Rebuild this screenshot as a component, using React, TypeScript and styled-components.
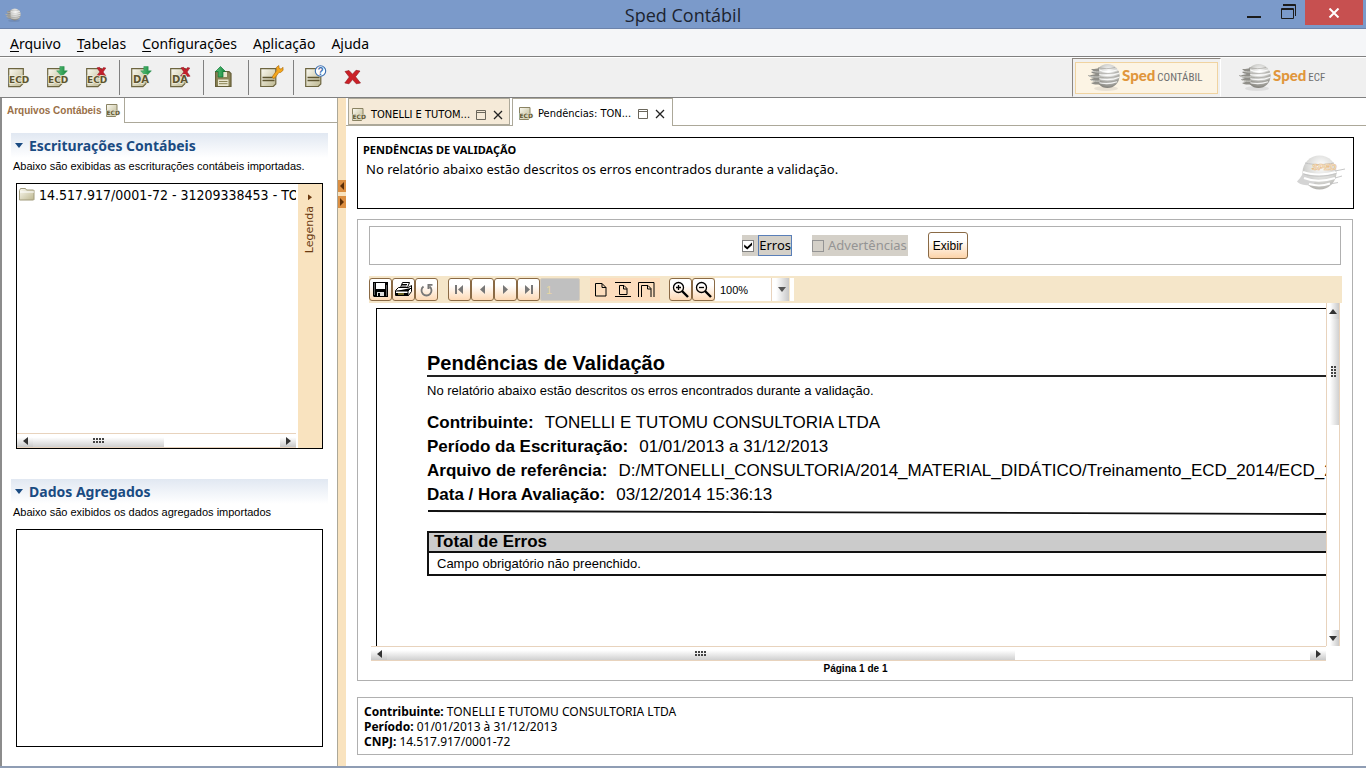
import React from 'react';
import styled, { createGlobalStyle, css } from 'styled-components';

const TAHOMA = '"Noto Sans", "DejaVu Sans Condensed", sans-serif';
const ARIAL = '"Liberation Sans", Arial, sans-serif';
const LINE = '#808080';
const BOX = '#b0b0b0';
const SAND = '#f9e3bf';

const Global = createGlobalStyle`
  *, *::before, *::after { box-sizing: border-box; }
  body { margin: 0; background: #fff; color: #000; font-family: ${TAHOMA}; }
  button, input, select { font: inherit; color: inherit; margin: 0; padding: 0; }
  h1, h2, p, dl, dd, dt { margin: 0; }
  svg { display: block; flex: none; }
`;

/* ---------- window frame ---------- */

const Window = styled.div`
  display: flex;
  flex-direction: column;
  min-height: 100vh;
`;

const TitleBar = styled.header`
  display: grid;
  grid-template-columns: 1fr auto 1fr;
  height: 29px;
  background: #7b9aca;
  border-bottom: 1px solid #6c83ab;
`;

const AppMark = styled.div`
  padding: 8px 0 0 5px;
`;

const WindowTitle = styled.h1`
  font: 400 18px/30px "Open Sans", sans-serif;
  color: #1c2430;
`;

const WindowControls = styled.div`
  display: flex;
  justify-content: flex-end;
  padding-right: 3px;
`;

const ControlButton = styled.button<{ $close?: boolean }>`
  display: flex;
  align-items: center;
  justify-content: center;
  width: ${p => (p.$close ? 58 : 34)}px;
  height: ${p => (p.$close ? 25 : 23)}px;
  border: 0;
  background: ${p => (p.$close ? '#c75050' : 'transparent')};
`;

const MenuBar = styled.nav`
  display: flex;
  gap: 16px;
  height: 28px;
  padding-left: 10px;
  background: #f5f6f8;
  border-bottom: 1px solid ${LINE};
`;

const MenuItem = styled.button`
  border: 0;
  background: none;
  font-size: 14px;
  line-height: 30px;
  u { text-underline-offset: 2px; }
`;

const ToolBar = styled.div`
  display: flex;
  align-items: center;
  height: 41px;
  background: #f0f0f0;
  border-top: 1px solid #fff;
  border-bottom: 1px solid ${LINE};
`;

const ToolButton = styled.button`
  display: flex;
  align-items: center;
  width: 39px;
  height: 36px;
  padding: 0 0 2px 8px;
  border: 0;
  background: none;
`;

const ToolSeparator = styled.span`
  width: 1px;
  height: 35px;
  margin: 0 3px 0 2px;
  background: ${LINE};
`;

const ModuleSwitch = styled.div`
  display: flex;
  align-self: stretch;
  margin-left: auto;
`;

const ModuleButton = styled.button<{ $active?: boolean }>`
  width: ${p => (p.$active ? 149 : 145)}px;
  padding: 2px;
  border: 1px solid #f0f0f0;
  background: #f0f0f0;
  ${p => p.$active && css`border-color: #8c8680 #fff #f0f0f0 #8c8680;`}
`;

const ModuleFace = styled.span<{ $active?: boolean }>`
  display: flex;
  align-items: center;
  height: 32px;
  padding: 0 0 2px ${p => (p.$active ? 12 : 14)}px;
  border: 1px solid ${p => (p.$active ? '#f0d3a0' : 'transparent')};
  background: ${p => (p.$active ? '#fcf4e4' : 'transparent')};
`;

const ModuleLabel = styled.span`
  display: flex;
  align-items: baseline;
  gap: 2px;
  margin-left: 2px;
`;

const ModuleBrand = styled.span`
  font: 900 15px/20px Lato, sans-serif;
  color: #e0963c;
`;

const ModuleName = styled.span`
  font: 400 11px/20px "Roboto Condensed", "Liberation Sans Narrow", sans-serif;
  color: #6f6f6f;
`;

const Workspace = styled.div`
  display: flex;
  flex: 1;
`;

const TaskStrip = styled.footer`
  height: 2px;
  background: #8f9db4;
`;

/* ---------- shared pieces ---------- */

const IconButton = styled.button`
  display: flex;
  padding: 0;
  border: 0;
  background: none;
`;

const HBar = styled.div`
  display: flex;
  align-items: stretch;
  height: 15px;
  border-top: 1px solid #e8d3bd;
  border-bottom: 1px solid #e8d3bd;
`;

const VBar = styled.div`
  display: flex;
  flex-direction: column;
  width: 14px;
  border-left: 1px solid #e8d3bd;
  border-right: 1px solid #e8d3bd;
`;

const Arrow = styled.button<{ $vertical?: boolean }>`
  display: flex;
  align-items: center;
  justify-content: center;
  flex: none;
  width: ${p => (p.$vertical ? 12 : 16)}px;
  height: ${p => (p.$vertical ? 16 : 13)}px;
  border: 0;
  background: linear-gradient(${p => (p.$vertical ? '90deg' : '180deg')}, #fff 25%, #c8c8c8);
`;

const Track = styled.div<{ $vertical?: boolean }>`
  display: flex;
  flex: 1;
  flex-direction: ${p => (p.$vertical ? 'column' : 'row')};
`;

const Thumb = styled.div<{ $vertical?: boolean; $share: number }>`
  display: flex;
  align-items: center;
  justify-content: center;
  flex: 0 0 ${p => p.$share}%;
  background: linear-gradient(${p => (p.$vertical ? '90deg' : '180deg')}, #fff 25%, #d0d0d0);
`;

/* ---------- left side ---------- */

const SideBar = styled.aside`
  display: flex;
  flex-direction: column;
  flex: none;
  width: 338px;
  border-left: 2px solid #8c8c8c;
  border-right: 1px solid #aca899;
`;

const SideTabs = styled.div`
  display: flex;
  height: 25px;
`;

const SideTab = styled.button`
  display: flex;
  align-items: center;
  gap: 5px;
  padding: 0 3px 0 5px;
  border: 0;
  border-right: 1px solid #aca899;
  background: #fff;
  font: 700 10px/23px ${ARIAL};
  color: #9a7048;
`;

const TabRest = styled.span`
  flex: 1;
  border-bottom: 1px solid #aca899;
`;

const SideBody = styled.div`
  display: flex;
  flex-direction: column;
  flex: 1;
  padding: 10px 9px 19px;
`;

const SideSection = styled.section<{ $grow: number }>`
  display: flex;
  flex-direction: column;
  flex: ${p => p.$grow} 1 0;
  & + & { margin-top: 30px; }
`;

const SectionTitle = styled.h2`
  display: flex;
  align-items: center;
  gap: 6px;
  padding-left: 4px;
  background: linear-gradient(180deg, #e1e8f2, #fff);
  font-size: 14px;
  line-height: 25px;
  color: #1a4b82;
`;

const SectionNote = styled.p`
  padding-left: 2px;
  font: 11px/16px ${ARIAL};
`;

const ListBox = styled.div`
  display: flex;
  flex: 1;
  min-height: 120px;
  margin: 9px 5px 0;
  border: 1px solid #000;
`;

const TreeArea = styled.div`
  display: flex;
  flex-direction: column;
  flex: 1;
  min-width: 0;
  padding-right: 2px;
`;

const TreeItem = styled.div`
  display: flex;
  gap: 4px;
  flex: 1;
  align-items: flex-start;
  padding-left: 2px;
  overflow: hidden;
  font: 14px/22px "DejaVu Sans Condensed", ${TAHOMA};
  white-space: nowrap;
  svg { margin-top: 4px; }
`;

const Legend = styled.button`
  display: flex;
  align-items: flex-start;
  justify-content: center;
  width: 24px;
  padding-top: 10px;
  border: 0;
  background: ${SAND};
`;

const LegendText = styled.span`
  display: flex;
  align-items: center;
  gap: 6px;
  writing-mode: vertical-rl;
  transform: rotate(180deg);
  font: 11px/16px "DejaVu Sans", sans-serif;
  color: #6b3a10;
`;

const Sash = styled.div`
  display: flex;
  flex-direction: column;
  gap: 4px;
  flex: none;
  width: 8px;
  padding-top: 82px;
  background: ${SAND};
`;

const SashButton = styled(IconButton)`
  align-items: center;
  justify-content: center;
  height: 12px;
  background: #dc8f42;
`;

/* ---------- right side ---------- */

const Editor = styled.main`
  display: flex;
  flex-direction: column;
  flex: 1;
  min-width: 0;
`;

const EditorTabs = styled.div`
  display: flex;
  height: 28px;
  padding-left: 2px;
  background: linear-gradient(#aca899, #aca899) bottom / 100% 1px no-repeat;
`;

const EditorTab = styled.div<{ $active?: boolean }>`
  display: flex;
  align-items: center;
  width: ${p => (p.$active ? 161 : 162)}px;
  height: ${p => (p.$active ? 28 : 27)}px;
  margin-right: ${p => (p.$active ? 0 : 2)}px;
  padding: ${p => (p.$active ? '2px 7px 0 6px' : '6px 6px 0 3px')};
  border: 1px solid #aca899;
  border-bottom-width: ${p => (p.$active ? 0 : 1)}px;
  background: ${p => (p.$active ? '#fff' : '#f5ead8')};
`;

const TabLabel = styled.button`
  flex: 1;
  min-width: 0;
  margin-left: 4px;
  border: 0;
  background: none;
  font: 11px/16px "DejaVu Sans Condensed", sans-serif;
  text-align: left;
  white-space: nowrap;
`;

const TabTools = styled.span`
  display: flex;
  gap: 7px;
`;

const EditorBody = styled.div`
  display: flex;
  flex-direction: column;
  flex: 1;
  padding: 11px 12px 11px 11px;
`;

const Banner = styled.section`
  display: flex;
  justify-content: space-between;
  align-items: center;
  height: 72px;
  margin-bottom: 10px;
  padding: 0 8px 0 5px;
  border: 1px solid #000;
`;

const BannerText = styled.div`
  align-self: flex-start;
  padding-top: 3px;
`;

const BannerTitle = styled.h2`
  font-size: 11px;
  line-height: 18px;
`;

const BannerNote = styled.p`
  padding-left: 3px;
  font-size: 13px;
  line-height: 20px;
`;

const Panel = styled.section`
  display: flex;
  flex-direction: column;
  flex: 1;
  margin-right: 1px;
  padding: 6px 10px 4px 11px;
  border: 1px solid ${BOX};
`;

const FilterBar = styled.form`
  display: flex;
  align-items: center;
  justify-content: center;
  gap: 20px;
  height: 39px;
  margin: 0 1px 11px 0;
  border: 1px solid ${BOX};
`;

const Check = styled.label<{ $off?: boolean }>`
  display: flex;
  align-items: center;
  gap: ${p => (p.$off ? 3 : 4)}px;
  background: #d4d0c8;
  font-size: 13px;
  line-height: 19px;
  color: ${p => (p.$off ? '#949494' : '#000')};
`;

const CheckText = styled.span<{ $focus?: boolean }>`
  border: 1px solid ${p => (p.$focus ? '#5a7fb8' : 'transparent')};
`;

const CheckBox = styled.input`
  position: relative;
  appearance: none;
  width: 12px;
  height: 12px;
  border: 1px solid #808080;
  background: #fff;
  &:disabled { background: transparent; border-color: #949494; }
  &:checked::after {
    content: '';
    position: absolute;
    inset: 1px;
    background: #000;
    clip-path: polygon(0 38%, 38% 68%, 100% 8%, 100% 45%, 38% 100%, 0 70%);
  }
`;

const PeachButton = styled.button`
  height: 27px;
  padding: 0 4px;
  border: 1px solid #8a6a45;
  border-radius: 3px;
  background: linear-gradient(180deg, #fff 30%, #fdd3a8);
  font: 12px/24px ${ARIAL};
`;

const ReportBar = styled.div`
  display: flex;
  align-items: center;
  height: 27px;
  background: #f5e6c9;
`;

const ReportGroup = styled.div<{ $after: number }>`
  display: flex;
  margin-right: ${p => p.$after}px;
`;

const ReportButton = styled.button`
  display: flex;
  align-items: center;
  justify-content: center;
  width: 23px;
  height: 23px;
  border: 1px solid #8a6a45;
  border-radius: 3px;
  background: linear-gradient(180deg, #fff 30%, #fdd9b5);
  color: #000;
  &:disabled { color: #777; }
`;

const PageInput = styled.input`
  width: 40px;
  height: 23px;
  padding-left: 5px;
  border: 1px solid #d6cdbd;
  border-radius: 2px;
  background: #c0c0c0;
  font: 11px/20px ${ARIAL};
  color: #e6d7a4;
`;

const FitGroup = styled.div`
  display: flex;
  align-items: center;
  justify-content: space-between;
  width: 70px;
  height: 23px;
  margin: 0 9px 0 10px;
  padding: 0 5px;
  background: #fdddbd;
`;

const ZoomBox = styled.div`
  display: flex;
  height: 23px;
  width: 79px;
  background: linear-gradient(90deg, #fff 56px, #e8d3bd 56px, #e8d3bd 57px, #fff 57px, #fff 61px, #c8c8c8 74px, #f5e6c9 74px, #f5e6c9 75px, #fff 75px);
`;

const ZoomSelect = styled.select`
  flex: 1;
  min-width: 0;
  padding-left: 5px;
  border: 0;
  appearance: none;
  background: none;
  font: 11px/22px ${ARIAL};
`;

const ZoomArrow = styled.svg`
  margin: 9px 8px 0 0;
  pointer-events: none;
`;

const Viewer = styled.div`
  display: grid;
  grid-template-columns: minmax(0, 1fr) 14px;
  grid-template-rows: 1fr 15px;
  flex: 1;
  padding: 0 2px 0 2px;
`;

const Paper = styled.article`
  margin: 5px 0 0 5px;
  padding: 43px 0 0 50px;
  border: solid #000;
  border-width: 1px 0 0 1px;
  overflow: hidden;
  font-family: ${ARIAL};
  white-space: nowrap;
`;

const ReportTitle = styled.h2`
  border-bottom: 2px solid #222;
  font-size: 20px;
  line-height: 23px;
`;

const ReportNote = styled.p`
  margin: 5px 0 11px;
  font-size: 13px;
  line-height: 18px;
`;

const Facts = styled.dl`
  font-size: 17px;
  line-height: 24px;
`;

const Fact = styled.div`
  display: flex;
  gap: 11px;
  dt { font-weight: 700; }
`;

const SlantRule = styled.svg`
  width: 100%;
  height: 5px;
  margin: 3px 0 16px;
`;

const ErrorTable = styled.table`
  width: 100%;
  border-collapse: separate;
  border-spacing: 0;
  border: solid #111;
  border-width: 2px 0 2px 2px;
  th, td { text-align: left; }
  th {
    padding: 0 0 0 5px;
    border-bottom: 2px solid #111;
    background: #cbcbcb;
    font-size: 17px;
    line-height: 18px;
  }
  td {
    padding: 0 0 0 8px;
    font-size: 13px;
    line-height: 21px;
  }
`;

const PageLabel = styled.p`
  font: 700 10px/15px ${ARIAL};
  text-align: center;
`;

const Summary = styled.section`
  height: 58px;
  margin: 16px 1px 0 0;
  padding: 6px;
  border: 1px solid ${BOX};
  font-size: 12px;
  line-height: 15px;
`;

/* ---------- drawings ---------- */

const HiddenDefs = styled.svg`
  position: absolute;
`;

const Defs = () => (
  <HiddenDefs width="0" height="0" aria-hidden="true">
    <defs>
      <linearGradient id="paper" x1="0" y1="0" x2="1" y2="1">
        <stop offset="0" stopColor="#fbfaf2" />
        <stop offset="1" stopColor="#bdb78f" />
      </linearGradient>
      <radialGradient id="ball" cx="0.55" cy="0.3" r="0.75">
        <stop offset="0" stopColor="#ffffff" />
        <stop offset="0.6" stopColor="#bcbcb8" />
        <stop offset="1" stopColor="#77756e" />
      </radialGradient>
      <linearGradient id="green" x1="0" y1="0" x2="1" y2="0">
        <stop offset="0" stopColor="#5fc27c" />
        <stop offset="1" stopColor="#14883c" />
      </linearGradient>
    </defs>
  </HiddenDefs>
);

type Badge = 'down' | 'remove' | undefined;

const DocIcon = ({ text, badge }: { text: string; badge?: Badge }) => (
  <svg width="24" height="24" viewBox="0 0 24 24">
    <path d="M.7 3.700h14.600v14.600l-3.400 3.400H.7z" fill="url(#paper)" stroke="#6d6540" strokeWidth="1.200" />
    {badge === 'down' && <path d="M12.800 1.500h4.400v4.300h3.200L15 11.500 9.600 5.800h3.200z" fill="url(#green)" stroke="#2c9150" strokeWidth="0.500" />}
    {badge === 'remove' && <path d="M11 2.800l2.600-.5 1.900 2.500 2-2.300 2.300.5-2.700 4 3 4.200-2.800.3-1.900-2.600-2.100 2.600-2.800-.6 3.300-4z" fill="#c4202c" stroke="#8f1420" strokeWidth="0.500" />}
    <text x={text.length > 2 ? 1 : 2} y="18" fontFamily="DejaVu Sans, sans-serif" fontWeight="700" fontSize={text.length > 2 ? 9 : 10} fill="#5d5430" stroke="#efecd9" strokeWidth="1.400" paintOrder="stroke">{text}</text>
  </svg>
);

const SmallEcd = () => (
  <svg width="15" height="15" viewBox="0 0 15 15">
    <path d="M.5 1.500h10.500v10l-1.500 2H.5z" fill="url(#paper)" stroke="#8a8363" />
    <text x="0.500" y="11.500" fontFamily="DejaVu Sans, sans-serif" fontWeight="700" fontSize="6" fill="#5d5430" stroke="#e9e6d0" strokeWidth="1" paintOrder="stroke">ECD</text>
  </svg>
);

const SaveUpIcon = () => (
  <svg width="24" height="24" viewBox="0 0 24 24">
    <path d="M.6 6.600h13.400l2 2v12.800H.6z" fill="#8b8457" stroke="#655e38" strokeWidth="1.200" />
    <path d="M4 7h8v5H4zM3 14.500h10.500V21H3z" fill="#e9e6cf" />
    <path d="M4 16.500h8.500M4 18.700h8.500" stroke="#8b8457" />
    <path d="M5.500 1.500l5 5H8V12H3.200V6.500H.5z" fill="url(#green)" stroke="#0d7a33" strokeWidth="0.700" />
  </svg>
);

const SheetIcon = ({ kind }: { kind: 'tools' | 'help' }) => (
  <svg width="24" height="24" viewBox="0 0 24 24">
    <path d="M.7 3.700h15.100v15.300l-2.500 2.500H.7z" fill="url(#paper)" stroke="#6d6540" strokeWidth="1.200" />
    <path d="M2.500 12.500h12M2.500 15.500h12" stroke="#5d5430" strokeWidth="1.500" />
    {kind === 'tools' ? (
      <path d="M12.500 11.500l4.200-6-.4-3 2.500-2 .4 3 2 .6 1.700-1.800.2 3-2.600 2.200-1.500-.2-4 5.500c-1 1.200-3.200.3-2.500-1.300z" fill="#f6a81c" stroke="#b06d08" strokeWidth="0.700" />
    ) : (
      <>
        <circle cx="15.500" cy="6" r="5.200" fill="#fff" stroke="#3d6fb0" strokeWidth="1.100" />
        <text x="15.500" y="9.500" textAnchor="middle" fontFamily="Liberation Sans, sans-serif" fontWeight="700" fontSize="10" fill="#3d6fb0">?</text>
      </>
    )}
  </svg>
);

const ExitIcon = () => (
  <svg width="18" height="18" viewBox="0 0 18 18">
    <path d="M1 3.500l4-1 3.500 3.700L12 2.300l4 .7-4.500 5.700L16.500 15l-4.200.8-3.800-4.200L5 15.800.8 15l4.500-6z" fill="#cb2027" stroke="#8e1218" strokeWidth="0.600" />
  </svg>
);

const Globe = ({ size = 32 }: { size?: number }) => (
  <svg width={size} height={size * 0.875} viewBox="0 0 32 28">
    <ellipse cx="18" cy="25.500" rx="12" ry="2.500" fill="#000" opacity="0.080" />
    <circle cx="19.500" cy="13" r="12" fill="url(#ball)" />
    <path d="M10 6.500c5 2.500 13 2.600 20 .3M8 10.800c8 2.200 16 2 23.200-.6M8 15c8 2.200 17 2 23.200-.8M9 19.200c6 1.800 14 1.800 20-.4" stroke="#fff" strokeWidth="1.100" fill="none" opacity="0.850" />
    <path d="M10 4.500c5 1.500 12 1.500 17 0M8.500 9c7 2.200 16 2 22.500-.4M7.500 13.200c8 2.200 17 2 24-.8M8 17.500c8 2 16 1.800 22.500-.6" stroke="#8c8a84" strokeWidth="0.700" fill="none" opacity="0.700" />
    <path d="M11 5c-3 1-6 1.300-8 1l2.500 2.300L3 9c1.500 1.500 3 1.800 5 1.900L2 12.300c-1 0-2-.2-2-.2.800 1.700 3 2.600 6 2.800l-4 1.300c1 1.500 3 2.300 5.500 2.500L3 20c2 1.500 5 1.800 8.500 1.500z" fill="#8f8e88" />
    <path d="M4 8c3 1 6 1.200 9 .9M1 12.800c3 1.200 7 1.500 11 1M3 17c3 1.200 6 1.400 9 1" stroke="#d8d8d4" strokeWidth="0.900" fill="none" />
  </svg>
);

const BannerGlobe = () => (
  <svg width="48" height="36" viewBox="0 0 48 36" opacity="0.600">
    <circle cx="22.500" cy="17.500" r="17" fill="url(#ball)" />
    <path d="M9 13C6 18 4 23 0 26.500c2 3 9 4.500 17 3.500 2-5-1-8-7-9z" fill="#b8b8b8" />
    <path d="M6 17c8 3 22 3.500 33 0M7 23c10 4 20 3.500 31 0M12 29c7 2 14 2 21-.5" stroke="#fff" strokeWidth="2" fill="none" />
    <path d="M8 8c9 2 20 2 29 0M6.500 19c9 3 22 3 33-.5M38 16l10-2M38 23l7-2M33 29l8-1.500" stroke="#999" strokeWidth="0.900" fill="none" />
    <text x="15" y="15" fontFamily="Liberation Sans, sans-serif" fontStyle="italic" fontWeight="700" fontSize="9" fill="#f5f5f5" stroke="#d98a20" strokeWidth="0.600">SPED</text>
  </svg>
);

const Folder = () => (
  <svg width="16" height="13" viewBox="0 0 16 13">
    <path d="M.5 2.500l1-2h5l1 1.500h7l.5.500v9l-.5.500h-14z" fill="url(#paper)" stroke="#a19b7c" />
    <path d="M1 4h14" stroke="#fff" />
  </svg>
);

const Tri = ({ dir, w = 6, h = 8, fill = '#333' }: { dir: 'l' | 'r' | 'u' | 'd'; w?: number; h?: number; fill?: string }) => {
  const d = { l: `M${w} 0V${h}L0 ${h / 2}z`, r: `M0 0V${h}L${w} ${h / 2}z`, u: `M0 ${h}H${w}L${w / 2} 0z`, d: `M0 0H${w}L${w / 2} ${h}z` }[dir];
  return <svg width={w} height={h}><path d={d} fill={fill} /></svg>;
};

const Grip = ({ vertical }: { vertical?: boolean }) => (
  <svg width={vertical ? 5 : 11} height={vertical ? 11 : 5}>
    <path
      d={vertical ? 'M1 0v11M4 0v11' : 'M0 1h11M0 4h11'}
      stroke="#444"
      strokeWidth="2"
      strokeDasharray="2 1"
    />
  </svg>
);

const TabMax = () => <svg width="10" height="10"><path d="M.5.500h9v9h-9zM.5 2.500h9" fill="none" stroke="#6b675c" /></svg>;
const TabX = () => <svg width="10" height="10"><path d="M1 1l8 8M9 1L1 9" stroke="#222" strokeWidth="1.300" /></svg>;

const HScroll = ({ share }: { share: number }) => (
  <HBar>
    <Arrow aria-label="Rolar para a esquerda"><Tri dir="l" w={5} /></Arrow>
    <Track><Thumb $share={share}><Grip /></Thumb></Track>
    <Arrow aria-label="Rolar para a direita"><Tri dir="r" w={5} /></Arrow>
  </HBar>
);

const VScroll = ({ share }: { share: number }) => (
  <VBar>
    <Arrow $vertical aria-label="Rolar para cima"><Tri dir="u" w={8} h={5} /></Arrow>
    <Track $vertical><Thumb $vertical $share={share}><Grip vertical /></Thumb></Track>
    <Arrow $vertical aria-label="Rolar para baixo"><Tri dir="d" w={8} h={5} /></Arrow>
  </VBar>
);

/* ---------- page ---------- */

const facts = [
  ['Contribuinte:', 'TONELLI E TUTOMU CONSULTORIA LTDA'],
  ['Período da Escrituração:', '01/01/2013 a 31/12/2013'],
  ['Arquivo de referência:', 'D:/MTONELLI_CONSULTORIA/2014_MATERIAL_DIDÁTICO/Treinamento_ECD_2014/ECD_2014'],
  ['Data / Hora Avaliação:', '03/12/2014 15:36:13'],
];

export default function App() {
  return (
    <Window>
      <Global />
      <Defs />
      <TitleBar>
        <AppMark><Globe size={16} /></AppMark>
        <WindowTitle>Sped Contábil</WindowTitle>
        <WindowControls>
          <ControlButton aria-label="Minimizar">
            <svg width="14" height="14"><path d="M0 12h14" stroke="#1c1c1c" strokeWidth="2" /></svg>
          </ControlButton>
          <ControlButton aria-label="Restaurar">
            <svg width="15" height="15"><path d="M.5 4.500h12v10H.5zM.5 5.500h12M2 .500h12.500V12M2 1.500h12" fill="none" stroke="#1c1c1c" /></svg>
          </ControlButton>
          <ControlButton $close aria-label="Fechar">
            <svg width="12" height="10"><path d="M1.500.500l9 9M10.500.500l-9 9" stroke="#fff" strokeWidth="2" /></svg>
          </ControlButton>
        </WindowControls>
      </TitleBar>

      <MenuBar>
        <MenuItem><u>A</u>rquivo</MenuItem>
        <MenuItem><u>T</u>abelas</MenuItem>
        <MenuItem><u>C</u>onfigurações</MenuItem>
        <MenuItem>A<u>p</u>licação</MenuItem>
        <MenuItem>A<u>j</u>uda</MenuItem>
      </MenuBar>

      <ToolBar>
        <ToolButton aria-label="Nova escrituração"><DocIcon text="ECD" /></ToolButton>
        <ToolButton aria-label="Importar escrituração"><DocIcon text="ECD" badge="down" /></ToolButton>
        <ToolButton aria-label="Excluir escrituração"><DocIcon text="ECD" badge="remove" /></ToolButton>
        <ToolSeparator />
        <ToolButton aria-label="Importar dados agregados"><DocIcon text="DA" badge="down" /></ToolButton>
        <ToolButton aria-label="Excluir dados agregados"><DocIcon text="DA" badge="remove" /></ToolButton>
        <ToolSeparator />
        <ToolButton aria-label="Cópia de segurança"><SaveUpIcon /></ToolButton>
        <ToolSeparator />
        <ToolButton aria-label="Configurações"><SheetIcon kind="tools" /></ToolButton>
        <ToolSeparator />
        <ToolButton aria-label="Ajuda"><SheetIcon kind="help" /></ToolButton>
        <ToolButton aria-label="Sair"><ExitIcon /></ToolButton>
        <ModuleSwitch>
          <ModuleButton $active>
            <ModuleFace $active>
              <Globe />
              <ModuleLabel><ModuleBrand>Sped</ModuleBrand><ModuleName>CONTÁBIL</ModuleName></ModuleLabel>
            </ModuleFace>
          </ModuleButton>
          <ModuleButton>
            <ModuleFace>
              <Globe />
              <ModuleLabel><ModuleBrand>Sped</ModuleBrand><ModuleName>ECF</ModuleName></ModuleLabel>
            </ModuleFace>
          </ModuleButton>
        </ModuleSwitch>
      </ToolBar>

      <Workspace>
        <SideBar>
          <SideTabs>
            <SideTab>Arquivos Contábeis <SmallEcd /></SideTab>
            <TabRest />
          </SideTabs>
          <SideBody>
            <SideSection $grow={316}>
              <SectionTitle><Tri dir="d" w={8} h={5} fill="#1a4b82" />Escriturações Contábeis</SectionTitle>
              <SectionNote>Abaixo são exibidas as escriturações contábeis importadas.</SectionNote>
              <ListBox>
                <TreeArea>
                  <TreeItem><Folder />14.517.917/0001-72 - 31209338453 - TONELLI E TUTOMU</TreeItem>
                  <HScroll share={53} />
                </TreeArea>
                <Legend>
                  <LegendText>Legenda <Tri dir="l" w={4} h={6} fill="#6b3a10" /></LegendText>
                </Legend>
              </ListBox>
            </SideSection>
            <SideSection $grow={268}>
              <SectionTitle><Tri dir="d" w={8} h={5} fill="#1a4b82" />Dados Agregados</SectionTitle>
              <SectionNote>Abaixo são exibidos os dados agregados importados</SectionNote>
              <ListBox />
            </SideSection>
          </SideBody>
        </SideBar>

        <Sash>
          <SashButton aria-label="Recolher painel"><Tri dir="l" w={4} fill="#5c2f08" /></SashButton>
          <SashButton aria-label="Expandir painel"><Tri dir="r" w={4} fill="#5c2f08" /></SashButton>
        </Sash>

        <Editor>
          <EditorTabs>
            <EditorTab>
              <SmallEcd />
              <TabLabel>TONELLI E TUTOM...</TabLabel>
              <TabTools>
                <IconButton aria-label="Maximizar"><TabMax /></IconButton>
                <IconButton aria-label="Fechar aba"><TabX /></IconButton>
              </TabTools>
            </EditorTab>
            <EditorTab $active>
              <SmallEcd />
              <TabLabel>Pendências: TON...</TabLabel>
              <TabTools>
                <IconButton aria-label="Maximizar"><TabMax /></IconButton>
                <IconButton aria-label="Fechar aba"><TabX /></IconButton>
              </TabTools>
            </EditorTab>
          </EditorTabs>

          <EditorBody>
            <Banner>
              <BannerText>
                <BannerTitle>PENDÊNCIAS DE VALIDAÇÃO</BannerTitle>
                <BannerNote>No relatório abaixo estão descritos os erros encontrados durante a validação.</BannerNote>
              </BannerText>
              <BannerGlobe />
            </Banner>

            <Panel>
              <FilterBar onSubmit={e => e.preventDefault()}>
                <Check>
                  <CheckBox type="checkbox" defaultChecked />
                  <CheckText $focus>Erros</CheckText>
                </Check>
                <Check $off>
                  <CheckBox type="checkbox" disabled />
                  <CheckText>Advertências</CheckText>
                </Check>
                <PeachButton>Exibir</PeachButton>
              </FilterBar>

              <ReportBar>
                <ReportGroup $after={10}>
                  <ReportButton aria-label="Salvar">
                    <svg width="15" height="15"><path d="M0 0h15v15H1l-1-1z" /><path d="M3 1h9v6H3z" fill="#fff" /><path d="M4 10h7v4H4z" fill="#ddd" /><path d="M5 11h2v3H5z" /><path d="M1.500 1v12M13.500 3v11" stroke="#777" strokeWidth="0.800" /></svg>
                  </ReportButton>
                  <ReportButton aria-label="Imprimir">
                    <svg width="17" height="15"><path d="M5.500 5.500l2-5h7l-2 5zM.5 8.500l3-3h10l3-2v6l-3 4h-13z" fill="#fff" stroke="#000" /><path d="M7 2.500h5M6.500 4h5M1 9h12l3-3M13 9v5" stroke="#000" /><path d="M1 11h12v3H1z" fill="#000" /><path d="M3 12h6" stroke="#ddc84a" /></svg>
                  </ReportButton>
                  <ReportButton aria-label="Atualizar" disabled>
                    <svg width="13" height="14"><path d="M3.500 3.500a5 5 0 1 0 6 0" fill="none" stroke="currentColor" strokeWidth="1.800" /><path d="M7.500 1h5v1.800H9.500V6H7.500z" fill="currentColor" /></svg>
                  </ReportButton>
                </ReportGroup>
                <ReportGroup $after={0}>
                  <ReportButton aria-label="Primeira página" disabled>
                    <svg width="9" height="9"><path d="M0 0h2v9H0zM8 0v9L3 4.500z" fill="currentColor" /></svg>
                  </ReportButton>
                  <ReportButton aria-label="Página anterior" disabled><Tri dir="l" w={5} h={9} fill="#777" /></ReportButton>
                  <ReportButton aria-label="Próxima página" disabled><Tri dir="r" w={5} h={9} fill="#777" /></ReportButton>
                  <ReportButton aria-label="Última página" disabled>
                    <svg width="9" height="9"><path d="M7 0h2v9H7zM1 0v9L6 4.500z" fill="currentColor" /></svg>
                  </ReportButton>
                  <PageInput aria-label="Página" defaultValue="1" disabled />
                </ReportGroup>
                <FitGroup>
                  <IconButton aria-label="Tamanho real">
                    <svg width="12" height="15"><path d="M.5 1.500h6.500l4 4v8.500H.5zM7 1.500v4h4" fill="none" stroke="#000" /></svg>
                  </IconButton>
                  <IconButton aria-label="Ajustar à página">
                    <svg width="16" height="15"><path d="M0 .500h16M0 14.500h16M4.500 3.500h4.500l3 3v6H4.500zM8.500 3.500v3.500h3.500" fill="none" stroke="#000" /></svg>
                  </IconButton>
                  <IconButton aria-label="Ajustar à largura">
                    <svg width="17" height="15"><path d="M.5 15V.500h15.500V15M3.500 15V3.500h6.500l3 3v8.500M9.500 3.500V7h3.500" fill="none" stroke="#000" /></svg>
                  </IconButton>
                </FitGroup>
                <ReportGroup $after={0}>
                  <ReportButton aria-label="Ampliar">
                    <svg width="17" height="17"><circle cx="6.500" cy="6.500" r="5" fill="none" stroke="#000" strokeWidth="1.300" /><path d="M4 6.500h5M6.500 4v5" stroke="#000" strokeWidth="1.300" /><path d="M10 10l6 6" stroke="#000" strokeWidth="2.400" /></svg>
                  </ReportButton>
                  <ReportButton aria-label="Reduzir">
                    <svg width="17" height="17"><circle cx="6.500" cy="6.500" r="5" fill="none" stroke="#000" strokeWidth="1.300" /><path d="M4 6.500h5" stroke="#000" strokeWidth="1.300" /><path d="M10 10l6 6" stroke="#000" strokeWidth="2.400" /></svg>
                  </ReportButton>
                </ReportGroup>
                <ZoomBox>
                  <ZoomSelect aria-label="Zoom" defaultValue="100%"><option>100%</option><option>50%</option></ZoomSelect>
                  <ZoomArrow width="8" height="5"><path d="M0 0h8L4 5z" fill="#555" /></ZoomArrow>
                </ZoomBox>
              </ReportBar>

              <Viewer>
                <Paper>
                  <ReportTitle>Pendências de Validação</ReportTitle>
                  <ReportNote>No relatório abaixo estão descritos os erros encontrados durante a validação.</ReportNote>
                  <Facts>
                    {facts.map(([name, value]) => (
                      <Fact key={name}><dt>{name}</dt><dd>{value}</dd></Fact>
                    ))}
                  </Facts>
                  <SlantRule viewBox="0 0 900 5" preserveAspectRatio="none"><path d="M1 1L900 4" stroke="#111" strokeWidth="1.800" /></SlantRule>
                  <ErrorTable>
                    <thead><tr><th>Total de Erros</th></tr></thead>
                    <tbody><tr><td>Campo obrigatório não preenchido.</td></tr></tbody>
                  </ErrorTable>
                </Paper>
                <VScroll share={34} />
                <HScroll share={68} />
              </Viewer>
              <PageLabel>Página 1 de 1</PageLabel>
            </Panel>

            <Summary>
              <p><b>Contribuinte:</b> TONELLI E TUTOMU CONSULTORIA LTDA</p>
              <p><b>Período:</b> 01/01/2013 à 31/12/2013</p>
              <p><b>CNPJ:</b> 14.517.917/0001-72</p>
            </Summary>
          </EditorBody>
        </Editor>
      </Workspace>
      <TaskStrip />
    </Window>
  );
}
